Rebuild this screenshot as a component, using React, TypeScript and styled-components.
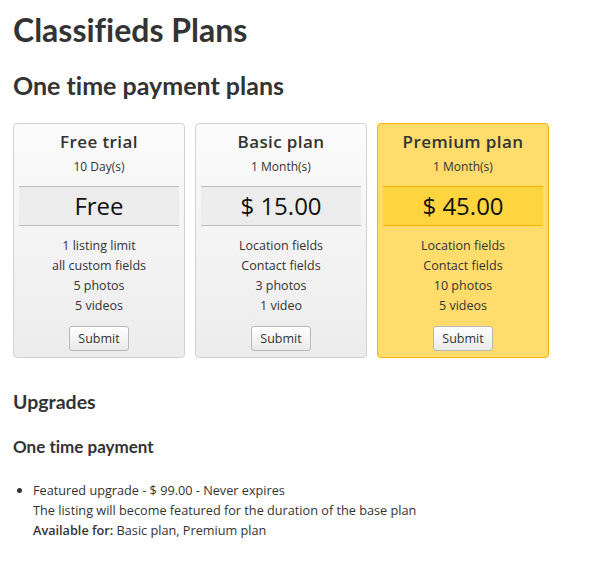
import styled, { createGlobalStyle } from "styled-components";

interface Plan {
    name: string;
    period: string;
    price: string;
    features: string[];
    featured?: boolean;
}

const plans: Plan[] = [
    { name: "Free trial", period: "10 Day(s)", price: "Free", features: ["1 listing limit", "all custom fields", "5 photos", "5 videos"] },
    { name: "Basic plan", period: "1 Month(s)", price: "$ 15.00", features: ["Location fields", "Contact fields", "3 photos", "1 video"] },
    { name: "Premium plan", period: "1 Month(s)", price: "$ 45.00", features: ["Location fields", "Contact fields", "10 photos", "5 videos"], featured: true },
];

const GlobalStyle = createGlobalStyle`
    body {
        margin: 0;
        background: #fff;
        color: #333;
        font-family: "Open Sans", "Liberation Sans", sans-serif;
        font-size: 12.5px;
    }
`;

const App = () => {
    return (
        <Page>
            <GlobalStyle />
            <Title>Classifieds Plans</Title>
            <SubTitle>One time payment plans</SubTitle>
            <PlanRow>
                {plans.map((plan) => (
                    <PlanCard key={plan.name} $featured={!!plan.featured}>
                        <PlanName>{plan.name}</PlanName>
                        <PlanPeriod>{plan.period}</PlanPeriod>
                        <PriceBand $featured={!!plan.featured}>{plan.price}</PriceBand>
                        <FeatureList>
                            {plan.features.map((f) => (
                                <li key={f}>{f}</li>
                            ))}
                        </FeatureList>
                        <SubmitButton>Submit</SubmitButton>
                    </PlanCard>
                ))}
            </PlanRow>
            <SectionTitle>Upgrades</SectionTitle>
            <GroupTitle>One time payment</GroupTitle>
            <UpgradeList>
                <li>
                    Featured upgrade - $ 99.00 - Never expires
                    <br />
                    The listing will become featured for the duration of the base plan
                    <br />
                    <b>Available for:</b> Basic plan, Premium plan
                </li>
            </UpgradeList>
        </Page>
    );
};

const Page = styled.div`
    padding: 0 13px 20px;
`;

const Heading = styled.div`
    font-family: Lato, "Open Sans", sans-serif;
    font-weight: 700;
    font-variant-ligatures: none;
    color: #333;
    margin: 0;
`;

const Title = styled(Heading).attrs({ as: "h1" })`
    font-size: 32px;
    line-height: 36px;
    margin-top: 12px;
`;

const SubTitle = styled(Heading).attrs({ as: "h2" })`
    font-size: 25px;
    line-height: 30px;
    margin-top: 22px;
`;

const PlanRow = styled.div`
    display: flex;
    gap: 10px;
    margin-top: 23px;
`;

const PlanCard = styled.div<{ $featured: boolean }>`
    width: 172px;
    box-sizing: border-box;
    border: 1px solid ${({ $featured }) => ($featured ? "#f6b500" : "#d2d2d2")};
    border-radius: 4px;
    background: ${({ $featured }) =>
        $featured ? "#ffdc6b" : "linear-gradient(to bottom, #fbfbfb, #ececec)"};
    padding: 7px 5px 6px;
    display: flex;
    flex-direction: column;
    align-items: center;
`;

const PlanName = styled.div`
    font-size: 17px;
    font-weight: 600;
    letter-spacing: 0.4px;
    line-height: 22px;
    color: #333;
`;

const PlanPeriod = styled.div`
    font-size: 12px;
    line-height: 18px;
    margin-top: 5px;
    color: #333;
`;

const PriceBand = styled.div<{ $featured: boolean }>`
    align-self: stretch;
    margin-top: 10px;
    height: 38px;
    line-height: 38px;
    text-align: center;
    font-size: 24px;
    color: #111;
    background: ${({ $featured }) => ($featured ? "#ffd53f" : "#ececec")};
    border-top: 1px solid ${({ $featured }) => ($featured ? "#f5b000" : "#bdbdbd")};
    border-bottom: 1px solid ${({ $featured }) => ($featured ? "#f5b000" : "#bdbdbd")};
`;

const FeatureList = styled.ul`
    list-style: none;
    margin: 10px 0 0;
    padding: 0;
    text-align: center;
    font-size: 12.5px;
    line-height: 20px;
    color: #333;
`;

const SubmitButton = styled.button`
    margin-top: 10px;
    height: 25px;
    padding: 0 8px;
    font-family: "Open Sans", "Liberation Sans", sans-serif;
    font-size: 12.5px;
    color: #333;
    background: linear-gradient(to bottom, #ffffff, #eaeaea);
    border: 1px solid #b8b8b8;
    border-radius: 3px;
`;

const SectionTitle = styled(Heading).attrs({ as: "h3" })`
    font-size: 19.5px;
    line-height: 24px;
    margin-top: 32px;
`;

const GroupTitle = styled(Heading).attrs({ as: "h4" })`
    font-size: 17px;
    line-height: 20px;
    margin-top: 23px;
`;

const UpgradeList = styled.ul`
    margin: 23px 0 0;
    padding-left: 20px;
    font-size: 12.7px;
    line-height: 20px;
    color: #333;

    b {
        font-weight: 600;
    }
`;

export default App;
